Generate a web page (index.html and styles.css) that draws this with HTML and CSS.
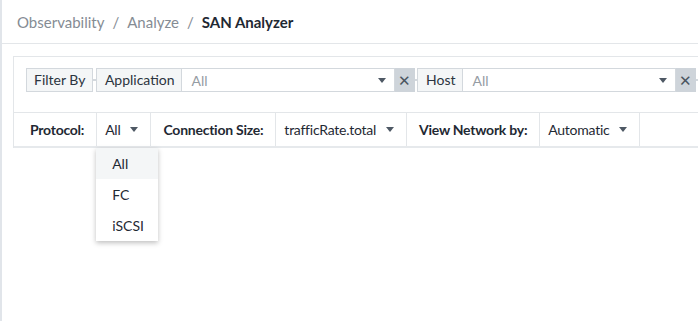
FILE: index.html
```html
<!DOCTYPE html>
<html lang="en">
<head>
  <meta charset="UTF-8" />
  <meta name="viewport" content="width=device-width, initial-scale=1.0"/>
  <title>SAN Analyzer</title>
  <link rel="stylesheet" href="styles.css">
</head>
<body>

  <div class="header">
    <span class="crumb">Observability</span>
    <span class="sep">/</span>
    <span class="crumb">Analyze</span>
    <span class="sep">/</span>
    <span class="crumb current">SAN Analyzer</span>
  </div>

  <div class="content">
    <div class="panel">
      <div class="filter-row">
        <div class="chip">Filter By</div>
        <div class="link"></div>
        <div class="filter">
          <div class="chip">Application</div>
          <div class="select"><span>All</span><i class="caret"></i></div>
          <div class="clear">✕</div>
        </div>
        <div class="link"></div>
        <div class="filter">
          <div class="chip">Host</div>
          <div class="select"><span>All</span><i class="caret"></i></div>
          <div class="clear">✕</div>
        </div>
        <div class="link"></div>
      </div>

      <div class="control-row">
        <div class="cell label">Protocol:</div>
        <div class="cell drop protocol">
          All <i class="caret"></i>
          <ul class="menu">
            <li class="active">All</li>
            <li>FC</li>
            <li>iSCSI</li>
          </ul>
        </div>
        <div class="cell label">Connection Size:</div>
        <div class="cell drop">trafficRate.total <i class="caret"></i></div>
        <div class="cell label">View Network by:</div>
        <div class="cell drop">Automatic <i class="caret"></i></div>
      </div>
    </div>
  </div>

</body>
</html>
```

FILE: styles.css
```css
body {
  margin: 0;
  min-height: 321px;
  border-left: 2px solid #e1e5ea;
  font-family: "Source Sans Pro", Lato, "Liberation Sans", sans-serif;
  font-size: 14px;
  color: #1f2933;
  background: #fff;
  overflow: hidden;
}
.header {
  height: 43px;
  border-bottom: 1px solid #e3e6e9;
  display: flex;
  align-items: center;
  padding-left: 15px;
  font-size: 15px;
}
.crumb {
  color: #858c94;
}
.crumb.current {
  color: #1f2933;
  font-weight: bold;
}
.sep {
  color: #858c94;
  margin: 0 8px;
}
.content {
  padding: 12px 0 0 11px;
}
.panel {
  border-left: 1px solid #e3e6e9;
  border-top: 1px solid #e3e6e9;
}
.filter-row {
  display: flex;
  align-items: center;
  padding: 11px 0 20px 12px;
  white-space: nowrap;
}
.chip {
  height: 22px;
  line-height: 22px;
  padding: 0 7px;
  background: #f4f6f7;
  border: 1px solid #d3d8dd;
  color: #2b3440;
}
.filter .chip {
  padding: 0 6px 0 8px;
  border-right: none;
}
.link {
  width: 5px;
  height: 2px;
  background: #d3d8dd;
}
.filter {
  display: flex;
  align-items: stretch;
}
.select {
  width: 194px;
  height: 22px;
  border: 1px solid #d3d8dd;
  display: flex;
  align-items: center;
  justify-content: space-between;
  padding: 0 8px 0 10px;
  color: #959ca3;
}
.clear {
  width: 20px;
  height: 24px;
  line-height: 24px;
  text-align: center;
  background: #ced4da;
  color: #4a5561;
  font-size: 15px;
}
.caret {
  display: inline-block;
  width: 0;
  height: 0;
  border-left: 4.5px solid transparent;
  border-right: 4.5px solid transparent;
  border-top: 5px solid #4e5864;
  vertical-align: middle;
}
.control-row {
  display: flex;
  height: 33px;
  border-top: 1px solid #e3e6e9;
  border-bottom: 2px solid #e6e9ec;
  white-space: nowrap;
}
.cell {
  display: flex;
  align-items: center;
  border-right: 1px solid #e3e6e9;
}
.cell.label {
  font-weight: bold;
  letter-spacing: -0.25px;
  padding: 0 12px 0 12px;
  color: #1f2933;
}
.cell.label:first-child {
  padding-left: 16px;
}
.cell.drop {
  padding: 0 12px 0 8px;
  gap: 10px;
  letter-spacing: -0.25px;
  position: relative;
}
.menu {
  position: absolute;
  top: 35px;
  left: -1px;
  width: 62px;
  margin: 0;
  padding: 0;
  list-style: none;
  letter-spacing: 0;
  background: #fff;
  box-shadow: 0 2px 5px rgba(0, 0, 0, 0.25);
  z-index: 2;
}
.menu li {
  height: 31px;
  line-height: 31px;
  padding-left: 16px;
}
.menu li.active {
  background: #f4f6f7;
}
```
